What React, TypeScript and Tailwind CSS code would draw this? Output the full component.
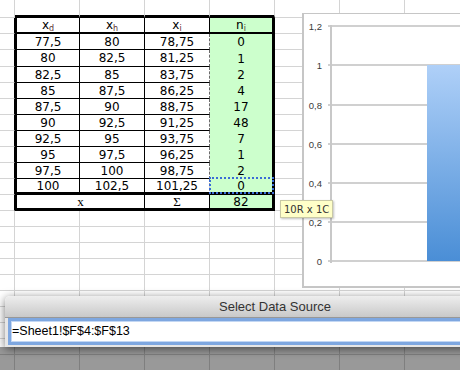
const GREEN = "bg-[#ccffcc]";

const data = [
  ["77,5", "80", "78,75", "0"],
  ["80", "82,5", "81,25", "1"],
  ["82,5", "85", "83,75", "2"],
  ["85", "87,5", "86,25", "4"],
  ["87,5", "90", "88,75", "17"],
  ["90", "92,5", "91,25", "48"],
  ["92,5", "95", "93,75", "7"],
  ["95", "97,5", "96,25", "1"],
  ["97,5", "100", "98,75", "2"],
  ["100", "102,5", "101,25", "0"],
];

const ticks: [string, number][] = [
  ["1,2", 12],
  ["1", 51],
  ["0,8", 91],
  ["0,6", 130],
  ["0,4", 169],
  ["0,2", 208],
  ["0", 247],
];

const cell = "shrink-0 h-full flex items-center justify-center";
const gray = "border-r border-b border-[#d4d4d4]";

const Blank = ({ first }: { first?: boolean }) => (
  <div className={`${cell} ${gray} ${first ? "w-[15px]" : "w-[65px]"}`} />
);

const BlankRow = ({ h }: { h: string }) => (
  <div className={`flex ${h}`}>
    <Blank first />
    {[0, 1, 2, 3, 4, 5, 6].map((i) => (
      <Blank key={i} />
    ))}
  </div>
);

const Head = ({ b, s }: { b: string; s: string }) => (
  <span>
    {b}
    <sub className="text-[8px] text-[#5a3030]">{s}</sub>
  </span>
);

const Chart = () => (
  <div className="absolute left-[302px] top-[13px] w-[170px] h-[275px] bg-white border-l-2 border-t border-b-2 border-[#c6c6c6]">
    <svg width="168" height="272" className="block">
      <defs>
        <linearGradient id="bar" x1="0" y1="0" x2="0" y2="1">
          <stop offset="0" stopColor="#afd0f8" />
          <stop offset="1" stopColor="#4a8ed6" />
        </linearGradient>
      </defs>
      {ticks.map(([label, y]) => (
        <g key={label}>
          <rect x={24} y={y - 1} width={150} height={2} fill="#d0d0d0" />
          <text
            x={18}
            y={y + 3.5}
            textAnchor="end"
            fontSize={9.5}
            fill="#3a3a3a"
            fontFamily="'Liberation Sans', sans-serif"
          >
            {label}
          </text>
        </g>
      ))}
      <rect x={26} y={11} width={2} height={238} fill="#c8c8c8" />
      <rect x={123} y={51} width={60} height={196} fill="url(#bar)" />
    </svg>
  </div>
);

export default function App() {
  return (
    <div className="relative w-[460px] h-[370px] overflow-hidden bg-white font-['DejaVu_Sans',sans-serif] text-[12px] text-black">
      <div className="flex flex-col">
        {/* row above table */}
        <div className="flex h-[18px]">
          <Blank first />
          {[0, 1, 2, 3].map((i) => (
            <div key={i} className={`${cell} w-[65px] border-r border-[#d4d4d4] border-b-[3px] border-b-black`} />
          ))}
          <Blank />
          <Blank />
          <Blank />
        </div>

        {/* header */}
        <div className="flex h-[16px]">
          <div className={`${cell} w-[15px] ${gray} border-r-black`} />
          <div className={`${cell} w-[65px] border-l-2 border-r border-b-2 border-black`}>
            <Head b="x" s="d" />
          </div>
          <div className={`${cell} w-[65px] border-r border-b-2 border-black`}>
            <Head b="x" s="h" />
          </div>
          <div className={`${cell} w-[65px] border-r border-b-2 border-black`}>
            <Head b="x" s="i" />
          </div>
          <div className={`${cell} w-[65px] border-r-[3px] border-b-2 border-black ${GREEN}`}>
            <Head b="n" s="i" />
          </div>
          <Blank />
          <Blank />
          <Blank />
        </div>

        {/* data rows */}
        {data.map((r, i) => {
          const last = i === data.length - 1;
          const bb = last ? "border-b-[3px]" : "border-b";
          return (
            <div key={i} className={`flex ${i === 1 ? "h-[17px]" : "h-[16px]"}`}>
              <div className={`${cell} w-[15px] ${gray} border-r-black`} />
              <div className={`${cell} w-[65px] border-l-2 border-r ${bb} border-black`}>{r[0]}</div>
              <div className={`${cell} w-[65px] border-r ${bb} border-black`}>{r[1]}</div>
              <div
                className={`${cell} w-[65px] border-r ${bb} border-black border-r-[#6a6a6a] [border-right-style:dashed]`}
              >
                {r[2]}
              </div>
              <div
                className={`${cell} w-[65px] border-r-[3px] border-black ${GREEN} ${
                  last ? "border-b-[3px] relative" : ""
                }`}
              >
                {r[3]}
                {last && (
                  <div className="absolute -left-px -top-[2px] -right-[2px] -bottom-[2px] border-2 border-dotted border-[#3a6cd6]" />
                )}
              </div>
              <Blank />
              <Blank />
              <Blank />
            </div>
          );
        })}

        {/* footer */}
        <div className="flex h-[16px]">
          <div className={`${cell} w-[15px] ${gray} border-r-black`} />
          <div
            className={`${cell} w-[130px] border-l-2 border-r border-b-[3px] border-black font-['Liberation_Serif',serif] text-[13px]`}
          >
            x
          </div>
          <div
            className={`${cell} w-[65px] border-r border-b-[3px] border-black font-['Liberation_Serif',serif] text-[13px]`}
          >
            Σ
          </div>
          <div className={`${cell} w-[65px] border-r-[3px] border-b-[3px] border-black ${GREEN}`}>82</div>
          <Blank />
          <Blank />
          <Blank />
        </div>

        {[0, 1, 2, 3, 4, 5, 6, 7, 8, 9].map((i) => (
          <BlankRow key={i} h="h-[16px]" />
        ))}
      </div>

      <Chart />

      {/* selection size tooltip */}
      <div className="absolute left-[280px] top-[200px] h-[18px] px-[3px] flex items-center bg-[#ffffc8] border border-[#c9c9a6] shadow-[1px_1px_2px_rgba(0,0,0,0.25)] text-[10px] text-[#333]">
        10R x 1C
      </div>

      {/* dimmed sheet under the dialog */}
      <div className="absolute left-0 right-0 top-[347px] bottom-0 bg-black/40" />

      {/* Select Data Source sheet dialog */}
      <div className="absolute left-[5px] top-[296px] w-[480px] rounded-tl-[5px] overflow-hidden shadow-[0_2px_10px_rgba(0,0,0,0.55)] font-['Liberation_Sans',sans-serif]">
        <div className="h-[22px] bg-gradient-to-b from-[#eeeeee] to-[#c9c9c9] border-b border-[#989898] flex items-center pl-[214px] text-[13px] text-[#333]">
          Select Data Source
        </div>
        <div className="h-[29px] bg-[#e6e6e6] pl-[3px]">
          <div className="h-[27px] border-[3px] border-[#7ea7e0] shadow-[inset_0_0_0_1px_#c3d7f3] bg-white flex items-center pl-px text-[12.5px] text-black">
            =Sheet1!$F$4:$F$13
          </div>
        </div>
      </div>
    </div>
  );
}
